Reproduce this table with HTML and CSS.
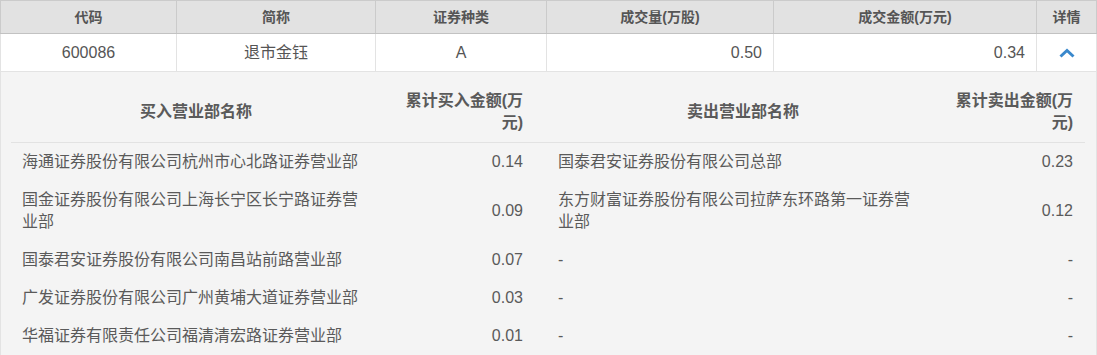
FILE: index.html
```html
<!DOCTYPE html>
<html lang="zh-CN">
<head>
<meta charset="utf-8">
<title>龙虎榜明细</title>
<link rel="stylesheet" href="styles.css">
</head>
<body>
<table class="main">
  <colgroup>
    <col class="c-code">
    <col class="c-name">
    <col class="c-type">
    <col class="c-vol">
    <col class="c-amt">
    <col class="c-more">
  </colgroup>
  <thead>
    <tr>
      <th>代码</th>
      <th>简称</th>
      <th>证券种类</th>
      <th>成交量(万股)</th>
      <th>成交金额(万元)</th>
      <th>详情</th>
    </tr>
  </thead>
  <tbody>
    <tr class="data">
      <td class="center">600086</td>
      <td class="center">退市金钰</td>
      <td class="center">A</td>
      <td class="num">0.50</td>
      <td class="num">0.34</td>
      <td class="center toggle">
        <svg class="chevron" width="16" height="10" viewBox="0 0 16 10"><path d="M1.5 8.5 L8 2.5 L14.5 8.5" fill="none" stroke="#3a88cc" stroke-width="3"/></svg>
      </td>
    </tr>
    <tr class="detail-row">
      <td colspan="6">
        <div class="detail">
          <div class="dh name-h">买入营业部名称</div>
          <div class="dh val-h buy-v">累计买入金额(万元)</div>
          <div class="dh name-h sell-n">卖出营业部名称</div>
          <div class="dh val-h sell-v">累计卖出金额(万元)</div>

          <div class="dc buy-n">海通证券股份有限公司杭州市心北路证券营业部</div>
          <div class="dc num buy-v">0.14</div>
          <div class="dc sell-n">国泰君安证券股份有限公司总部</div>
          <div class="dc num sell-v">0.23</div>

          <div class="dc buy-n">国金证券股份有限公司上海长宁区长宁路证券营业部</div>
          <div class="dc num buy-v">0.09</div>
          <div class="dc sell-n">东方财富证券股份有限公司拉萨东环路第一证券营业部</div>
          <div class="dc num sell-v">0.12</div>

          <div class="dc buy-n">国泰君安证券股份有限公司南昌站前路营业部</div>
          <div class="dc num buy-v">0.07</div>
          <div class="dc sell-n">-</div>
          <div class="dc num sell-v">-</div>

          <div class="dc buy-n">广发证券股份有限公司广州黄埔大道证券营业部</div>
          <div class="dc num buy-v">0.03</div>
          <div class="dc sell-n">-</div>
          <div class="dc num sell-v">-</div>

          <div class="dc buy-n">华福证券有限责任公司福清清宏路证券营业部</div>
          <div class="dc num buy-v">0.01</div>
          <div class="dc sell-n">-</div>
          <div class="dc num sell-v">-</div>
        </div>
      </td>
    </tr>
  </tbody>
</table>
</body>
</html>
```

FILE: styles.css
```css
html, body {
  margin: 0;
  padding: 0;
  background: #ffffff;
}

body {
  font-family: "Liberation Sans", "Noto Sans CJK SC", sans-serif;
  color: #555555;
}

.main {
  width: 1096px;
  border-collapse: collapse;
  table-layout: fixed;
}

.c-code { width: 176px; }
.c-name { width: 199px; }
.c-type { width: 171px; }
.c-vol  { width: 227px; }
.c-amt  { width: 263px; }
.c-more { width: 60px; }

.main th {
  height: 32px;
  padding: 0;
  background: #e2e2e2;
  border: 1px solid #cbcbcb;
  border-bottom-color: #c2c2c2;
  font-size: 14px;
  font-weight: bold;
  color: #555555;
  text-align: center;
  line-height: 20px;
}

.data td {
  height: 37px;
  padding: 0 11px;
  border: 1px solid #e3e3e3;
  font-size: 16px;
  color: #555555;
  line-height: 20px;
  background: #ffffff;
}

.center { text-align: center; }
.num { text-align: right; }

.toggle { padding: 0; }

.chevron {
  display: block;
  margin: 1px auto 0;
}

.detail-row > td {
  padding: 0;
  border: 1px solid #e3e3e3;
  border-bottom: none;
  background: #f4f4f4;
}

.detail {
  display: grid;
  grid-template-columns: 370px 166px 392px 146px;
  margin: 0 10px;
  padding-top: 10px;
  border-bottom: 1px solid #dcdcdc;
  font-size: 16px;
  line-height: 22px;
  color: #5a5a5a;
}

.dh {
  font-weight: bold;
  padding: 8px 0;
  border-bottom: 1px solid #e2e2e2;
  display: flex;
  align-items: center;
}

.name-h { justify-content: center; text-align: center; }

.val-h { justify-content: flex-end; text-align: right; }

.dc {
  padding: 8px 0;
  display: flex;
  align-items: center;
}

.dc.num { justify-content: flex-end; }

.buy-n { padding-left: 11px; padding-right: 16px; }
.buy-v { padding-left: 16px; padding-right: 24px; }
.sell-n { padding-left: 11px; padding-right: 20px; }
.sell-v { padding-left: 10px; padding-right: 12px; }

.dh.sell-n { padding-left: 0; padding-right: 0; }
```
